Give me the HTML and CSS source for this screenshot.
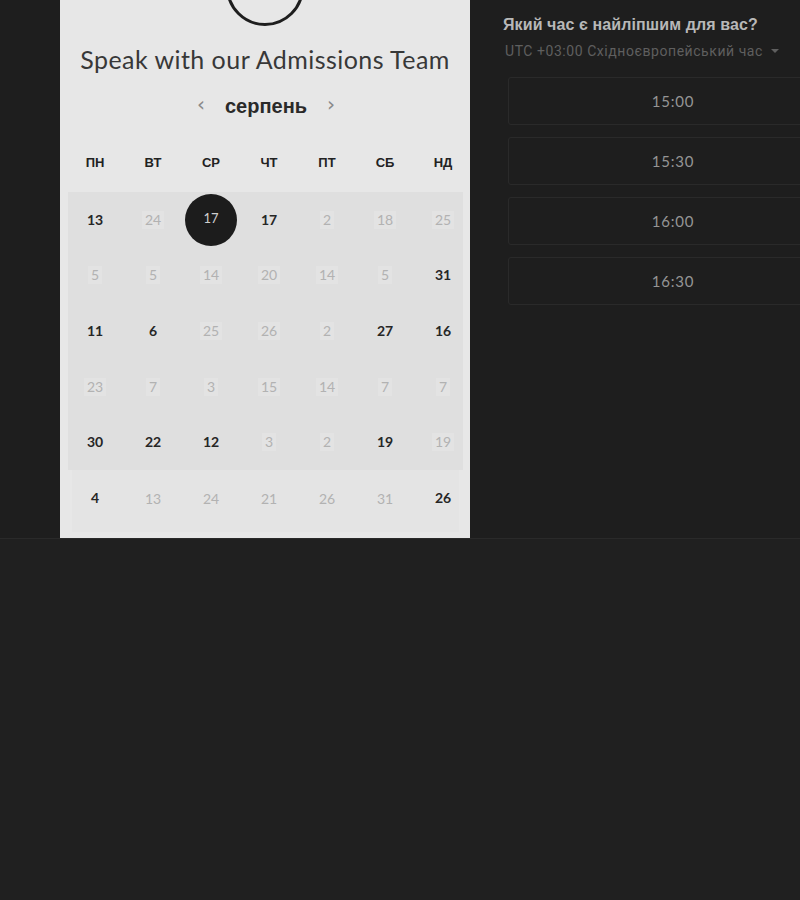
FILE: index.html
```html
<!DOCTYPE html>
<html lang="uk">
<head>
<meta charset="utf-8">
<title>Admissions</title>
<link rel="stylesheet" href="styles.css">
</head>
<body>
<div class="top">
  <div class="gutter"></div>
  <section class="panel">
    <div class="avatar"></div>
    <h1 class="title">Speak with our Admissions Team</h1>
    <div class="month">
      <span class="chev">&#8249;</span>
      <span class="month-name">серпень</span>
      <span class="chev">&#8250;</span>
    </div>
    <div class="dow">
      <span>ПН</span><span>ВТ</span><span>СР</span><span>ЧТ</span><span>ПТ</span><span>СБ</span><span>НД</span>
    </div>
    <div class="cal">
      <div class="weeks main">
        <span class="d on">13</span><span class="d off">24</span><span class="d sel"><i>17</i></span><span class="d on">17</span><span class="d off">2</span><span class="d off">18</span><span class="d off">25</span>
        <span class="d off">5</span><span class="d off">5</span><span class="d off">14</span><span class="d off">20</span><span class="d off">14</span><span class="d off">5</span><span class="d on">31</span>
        <span class="d on">11</span><span class="d on">6</span><span class="d off">25</span><span class="d off">26</span><span class="d off">2</span><span class="d on">27</span><span class="d on">16</span>
        <span class="d off">23</span><span class="d off">7</span><span class="d off">3</span><span class="d off">15</span><span class="d off">14</span><span class="d off">7</span><span class="d off">7</span>
        <span class="d on">30</span><span class="d on">22</span><span class="d on">12</span><span class="d off">3</span><span class="d off">2</span><span class="d on">19</span><span class="d off">19</span>
      </div>
      <div class="weeks last">
        <span class="d on">4</span><span class="d off">13</span><span class="d off">24</span><span class="d off">21</span><span class="d off">26</span><span class="d off">31</span><span class="d on">26</span>
      </div>
    </div>
  </section>
  <section class="times">
    <h2 class="q">Який час є найліпшим для вас?</h2>
    <div class="tz">UTC +03:00 Східноєвропейський час <span class="caret"></span></div>
    <div class="slots">
      <div class="slot">15:00</div>
      <div class="slot">15:30</div>
      <div class="slot">16:00</div>
      <div class="slot">16:30</div>
    </div>
  </section>
</div>
</body>
</html>
```
FILE: styles.css
```css
html, body {
  margin: 0;
  padding: 0;
}
body {
  background: #202020;
  width: 800px;
  height: 900px;
  overflow: hidden;
  font-family: "Lato", "Liberation Sans", sans-serif;
}
.top {
  display: flex;
  height: 538px;
  background: #1e1e1e;
  border-bottom: 1px solid #2a2a2a;
}
.gutter {
  width: 60px;
  flex: none;
}
.panel {
  width: 410px;
  flex: none;
  background: #e7e7e7;
  display: flex;
  flex-direction: column;
  align-items: center;
  overflow: visible;
}
.avatar {
  width: 72px;
  height: 72px;
  border: 3px solid #1e1e1e;
  border-radius: 50%;
  margin-top: -52px;
  flex: none;
}
.title {
  margin: 18px 0 0;
  font-family: "Lato", sans-serif;
  font-weight: 400;
  font-size: 25px;
  line-height: 30px;
  color: #383838;
  letter-spacing: 0.45px;
}
.month {
  margin-top: 17px;
  height: 30px;
  display: flex;
  align-items: center;
  gap: 20px;
  margin-left: 2px;
}
.chev {
  color: #8a8a8a;
  font-family: "DejaVu Sans", sans-serif;
  font-size: 20px;
  line-height: 30px;
  margin-top: -4px;
}
.month-name {
  font-family: "Liberation Sans", sans-serif;
  font-weight: 700;
  font-size: 20px;
  color: #2a2a2a;
  line-height: 30px;
}
.dow {
  margin-top: 26px;
  width: 406px;
  margin-left: 8px;
  display: grid;
  grid-template-columns: repeat(7, 58px);
  height: 30px;
  align-items: center;
  justify-items: center;
  font-family: "Liberation Sans", sans-serif;
  font-weight: 700;
  font-size: 13px;
  color: #222;
}
.cal {
  margin-top: 15px;
  width: 395px;
  align-self: flex-start;
  margin-left: 8px;
  display: flex;
  flex-direction: column;
}
.weeks {
  display: grid;
  grid-template-columns: repeat(7, 58px);
  grid-auto-rows: 55.6px;
  width: 406px;
  margin-left: -2px;
  align-items: center;
  justify-items: center;
}
.weeks.main {
  background: linear-gradient(to right, transparent 2px, #dfdfdf 2px, #dfdfdf 397px, transparent 397px);
}
.weeks.last {
  background: linear-gradient(to right, transparent 6px, #e4e4e4 6px, #e4e4e4 393px, transparent 393px);
  grid-auto-rows: 62px;
  align-items: start;
  padding-top: 20px;
  box-sizing: border-box;
  height: 62px;
}
.d {
  font-size: 14px;
  line-height: 16px;
  text-align: center;
}
.d.on {
  color: #262626;
  font-weight: 700;
}
.d.off {
  color: #b2b2b2;
  background: #e3e3e3;
  padding: 1px 3px;
}
.weeks.last .d.off {
  background: transparent;
}
.d.sel {
  width: 52px;
  height: 52px;
  border-radius: 50%;
  background: #1c1c1c;
  color: #cfcfcf;
  display: flex;
  align-items: center;
  justify-content: center;
  font-size: 13px;
}
.d.sel i {
  font-style: normal;
  margin-top: -3px;
}
.times {
  flex: 1;
  padding-left: 33px;
  overflow: hidden;
}
.q {
  margin: 15px 0 0;
  font-family: "Liberation Sans", sans-serif;
  font-weight: 700;
  font-size: 16px;
  line-height: 20px;
  color: #b8b8b8;
  letter-spacing: 0.1px;
}
.tz {
  margin-top: 6px;
  margin-left: 2px;
  font-family: "Roboto", "Liberation Sans", sans-serif;
  font-size: 14px;
  line-height: 20px;
  color: #5f5f5f;
  letter-spacing: 0.55px;
  white-space: nowrap;
  display: flex;
  align-items: center;
  gap: 8px;
}
.caret {
  width: 0;
  height: 0;
  border-left: 4px solid transparent;
  border-right: 4px solid transparent;
  border-top: 4px solid #5f5f5f;
}
.slots {
  margin-top: 16px;
  margin-left: 5px;
  width: 330px;
  display: flex;
  flex-direction: column;
  gap: 12px;
}
.slot {
  height: 46px;
  border: 1px solid #2a2a2a;
  border-radius: 3px;
  display: flex;
  align-items: center;
  justify-content: center;
  font-family: "Lato", sans-serif;
  font-size: 15px;
  color: #959595;
  letter-spacing: 0.8px;
}
```
